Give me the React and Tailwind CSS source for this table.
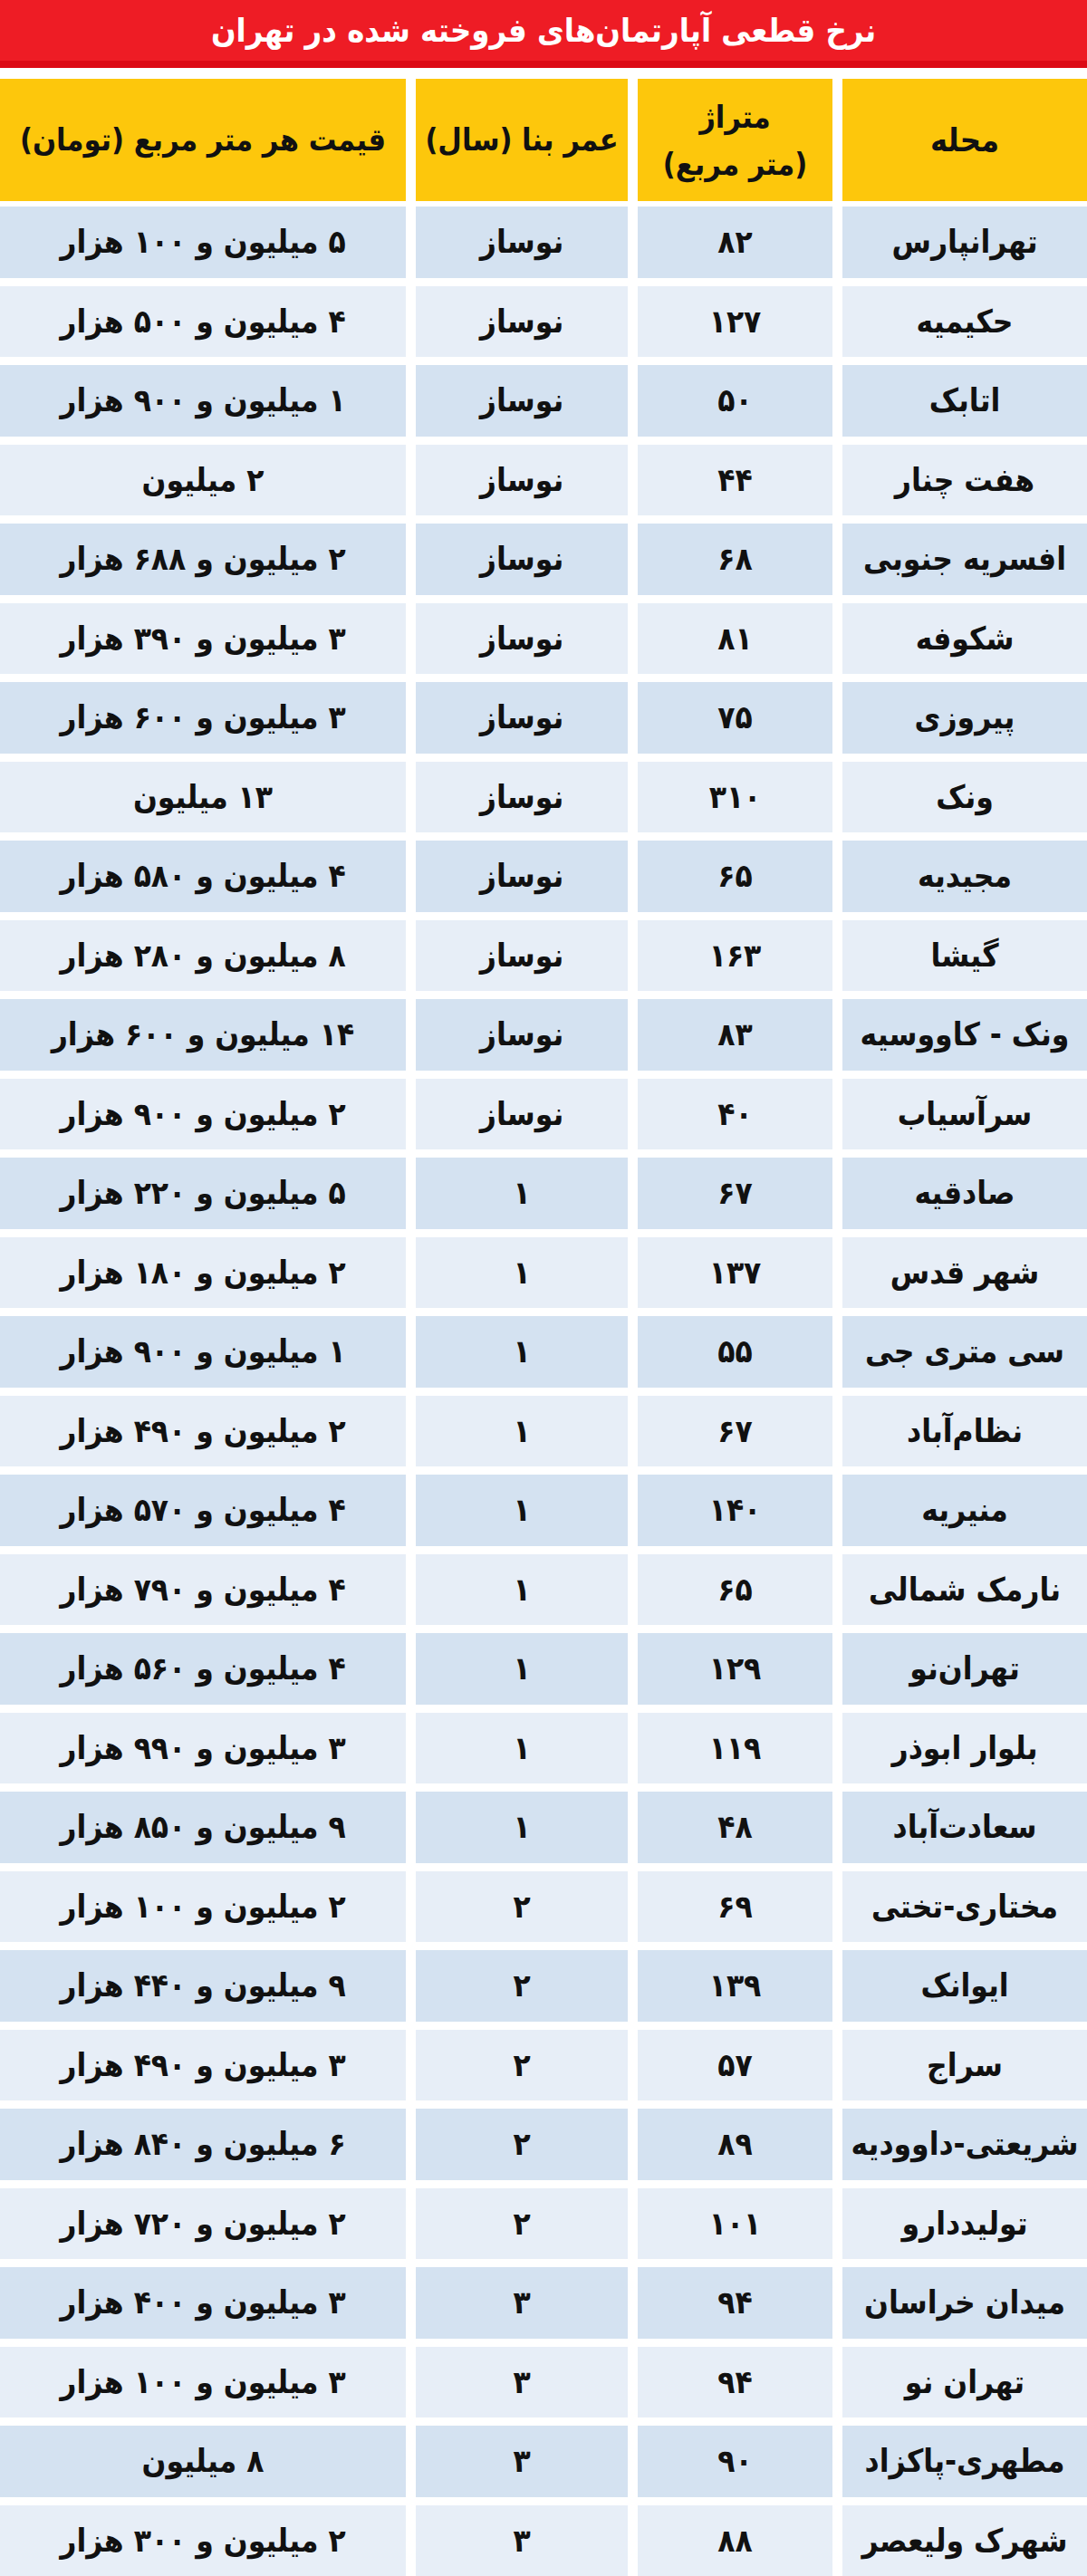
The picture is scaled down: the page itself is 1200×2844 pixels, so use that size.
import React from "react";

const rows = [
  ["تهرانپارس", "۸۲", "نوساز", "۵ میلیون و ۱۰۰ هزار"],
  ["حکیمیه", "۱۲۷", "نوساز", "۴ میلیون و ۵۰۰ هزار"],
  ["اتابک", "۵۰", "نوساز", "۱ میلیون و ۹۰۰ هزار"],
  ["هفت چنار", "۴۴", "نوساز", "۲ میلیون"],
  ["افسریه جنوبی", "۶۸", "نوساز", "۲ میلیون و ۶۸۸ هزار"],
  ["شکوفه", "۸۱", "نوساز", "۳ میلیون و ۳۹۰ هزار"],
  ["پیروزی", "۷۵", "نوساز", "۳ میلیون و ۶۰۰ هزار"],
  ["ونک", "۳۱۰", "نوساز", "۱۳ میلیون"],
  ["مجیدیه", "۶۵", "نوساز", "۴ میلیون و ۵۸۰ هزار"],
  ["گیشا", "۱۶۳", "نوساز", "۸ میلیون و ۲۸۰ هزار"],
  ["ونک - کاووسیه", "۸۳", "نوساز", "۱۴ میلیون و ۶۰۰ هزار"],
  ["سرآسیاب", "۴۰", "نوساز", "۲ میلیون و ۹۰۰ هزار"],
  ["صادقیه", "۶۷", "۱", "۵ میلیون و ۲۲۰ هزار"],
  ["شهر قدس", "۱۳۷", "۱", "۲ میلیون و ۱۸۰ هزار"],
  ["سی متری جی", "۵۵", "۱", "۱ میلیون و ۹۰۰ هزار"],
  ["نظام‌آباد", "۶۷", "۱", "۲ میلیون و ۴۹۰ هزار"],
  ["منیریه", "۱۴۰", "۱", "۴ میلیون و ۵۷۰ هزار"],
  ["نارمک شمالی", "۶۵", "۱", "۴ میلیون و ۷۹۰ هزار"],
  ["تهران‌نو", "۱۲۹", "۱", "۴ میلیون و ۵۶۰ هزار"],
  ["بلوار ابوذر", "۱۱۹", "۱", "۳ میلیون و ۹۹۰ هزار"],
  ["سعادت‌آباد", "۴۸", "۱", "۹ میلیون و ۸۵۰ هزار"],
  ["مختاری-تختی", "۶۹", "۲", "۲ میلیون و ۱۰۰ هزار"],
  ["ایوانک", "۱۳۹", "۲", "۹ میلیون و ۴۴۰ هزار"],
  ["سراج", "۵۷", "۲", "۳ میلیون و ۴۹۰ هزار"],
  ["شریعتی-داوودیه", "۸۹", "۲", "۶ میلیون و ۸۴۰ هزار"],
  ["تولیددارو", "۱۰۱", "۲", "۲ میلیون و ۷۲۰ هزار"],
  ["میدان خراسان", "۹۴", "۳", "۳ میلیون و ۴۰۰ هزار"],
  ["تهران نو", "۹۴", "۳", "۳ میلیون و ۱۰۰ هزار"],
  ["مطهری-پاکزاد", "۹۰", "۳", "۸ میلیون"],
  ["شهرک ولیعصر", "۸۸", "۳", "۲ میلیون و ۳۰۰ هزار"],
];

const font = { fontFamily: '"DejaVu Sans Condensed", "DejaVu Sans", sans-serif' };

export default function App() {
  return (
    <div
      dir="rtl"
      className="w-[1200px] h-[2844px] bg-white overflow-hidden text-[#111]"
      style={font}
    >
      <div className="h-[75px] bg-[#ee1c25] border-b-[8px] border-[#dc0a15] flex items-center justify-center">
        <h1 className="text-white font-bold text-[36px] leading-none tracking-[-1px]">
          نرخ قطعی آپارتمان‌های فروخته شده در تهران
        </h1>
      </div>
      <div className="mt-[12px] grid grid-cols-[270px_215px_234px_448px] gap-x-[11px]">
        <div className="h-[135px] bg-[#fdc70c] flex items-center justify-center font-bold text-[36px]">
          محله
        </div>
        <div className="h-[135px] bg-[#fdc70c] flex flex-col items-center justify-center font-bold text-[34px] leading-[52px]">
          <span>متراژ</span>
          <span>(متر مربع)</span>
        </div>
        <div className="h-[135px] bg-[#fdc70c] flex items-center justify-center font-bold text-[34px] tracking-[-0.5px]">
          عمر بنا (سال)
        </div>
        <div className="h-[135px] bg-[#fdc70c] flex items-center justify-center font-bold text-[34px] tracking-[-0.5px]">
          قیمت هر متر مربع (تومان)
        </div>
      </div>
      <div className="mt-[6px] grid grid-cols-[270px_215px_234px_448px] gap-x-[11px] gap-y-[9px] auto-rows-[78.5px]">
        {rows.map((r, i) => {
          const bg = i % 2 === 0 ? "bg-[#d4e2f1]" : "bg-[#e7eef7]";
          return (
            <React.Fragment key={i}>
              {r.map((c, j) => (
                <div
                  key={j}
                  className={`${bg} flex items-center justify-center font-bold text-[35px] tracking-[-1px] whitespace-nowrap`}
                >
                  {c}
                </div>
              ))}
            </React.Fragment>
          );
        })}
      </div>
    </div>
  );
}
